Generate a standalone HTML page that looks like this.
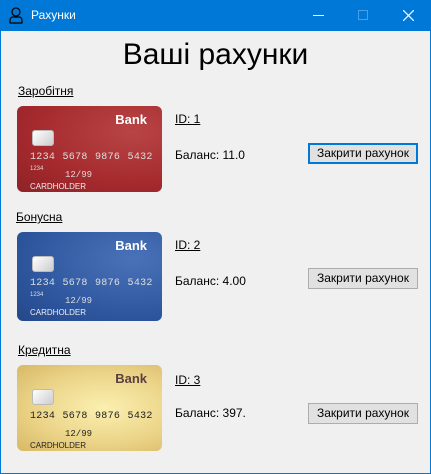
<!DOCTYPE html>
<html><head><meta charset="utf-8"><style>
*{margin:0;padding:0;box-sizing:border-box}
body{width:431px;height:474px;background:#f0f0f0;position:relative;overflow:hidden;font-family:"Liberation Sans",sans-serif;font-size:12px;color:#000}
.frame{position:absolute;left:0;top:0;width:431px;height:474px;border:1px solid #0078d7;border-top:none}
.tb{position:absolute;left:0;top:0;width:431px;height:31px;background:#0078d7;color:#fff}
.tb .t{position:absolute;left:31px;top:8px;font-size:12px}
.a{position:absolute;white-space:nowrap}
.u{text-decoration:underline}
.card{position:absolute;left:17px;width:145px;border-radius:6px;overflow:hidden}
.card .bank{position:absolute;right:15px;top:6px;font-weight:bold;font-size:13px;color:#fff}
.card .chip{position:absolute;left:15px;top:24px;width:22px;height:16px;border-radius:3px;background:linear-gradient(135deg,#fff,#ccc);border:1px solid #bbb}
.card .num{position:absolute;left:13px;top:46px;font-family:"Liberation Mono",monospace;font-size:10px;letter-spacing:0.3px;color:#ddd;white-space:nowrap;word-spacing:1px}
.card .s{position:absolute;left:13px;top:60px;font-size:6px;color:#ddd}
.card .exp{position:absolute;left:48px;top:64px;font-family:"Liberation Mono",monospace;font-size:9px;color:#ddd}
.card .ch{position:absolute;left:13px;top:76px;font-size:8px;color:#eee}
.btn{position:absolute;left:308px;width:110px;height:21px;background:#e1e1e1;border:1px solid #adadad;text-align:center;line-height:19px;font-size:12px}
</style></head><body>
<div class="tb"><svg style="position:absolute;left:9px;top:7px" width="14" height="17" viewBox="0 0 14 17" fill="none" stroke="#000" stroke-width="1.2"><circle cx="7" cy="5" r="4"/><path d="M1 16v-3a3 3 0 0 1 3-3h6a3 3 0 0 1 3 3v3z"/></svg><span class="t">Рахунки</span>
<div style="position:absolute;left:313px;top:15px;width:11px;height:1px;background:#fff"></div>
<div style="position:absolute;left:358px;top:10px;width:10px;height:10px;border:1px solid #4aa0e6"></div>
<svg style="position:absolute;left:403px;top:10px" width="11" height="11"><path d="M0 0L11 11M11 0L0 11" stroke="#fff" stroke-width="1.2"/></svg>
</div>
<div class="a" style="left:0;width:431px;top:38px;text-align:center;font-size:30px">Ваші рахунки</div>

<div class="a u" style="left:18px;top:84px">Заробітня</div>
<div class="card" style="top:106px;height:86px;background:radial-gradient(ellipse at 80% 30%,#b84545,#a52a2e 60%,#8f2226)"><div class="bank">Bank</div><div class="chip"></div><div class="num">1234 5678 9876 5432</div><div class="s">1234</div><div class="exp">12/99</div><div class="ch">CARDHOLDER</div></div>
<div class="a u" style="left:175px;top:112px">ID: 1</div>
<div class="a" style="left:175px;top:148px">Баланс: 11.0</div>
<div class="btn" style="top:143px;border:2px solid #0078d7;line-height:17px">Закрити рахунок</div>

<div class="a u" style="left:16px;top:210px">Бонусна</div>
<div class="card" style="top:232px;height:89px;background:radial-gradient(ellipse at 80% 30%,#4a72b8,#2f58a0 60%,#24478a)"><div class="bank">Bank</div><div class="chip"></div><div class="num">1234 5678 9876 5432</div><div class="s">1234</div><div class="exp">12/99</div><div class="ch">CARDHOLDER</div></div>
<div class="a u" style="left:175px;top:238px">ID: 2</div>
<div class="a" style="left:175px;top:274px">Баланс: 4.00</div>
<div class="btn" style="top:268px">Закрити рахунок</div>

<div class="a u" style="left:18px;top:343px">Кредитна</div>
<div class="card" style="top:365px;height:86px;background:radial-gradient(ellipse at 60% 50%,#fbf0b0,#ecd58a 55%,#d8b865)"><div class="bank" style="color:#5a4040">Bank</div><div class="chip"></div><div class="num" style="color:#222">1234 5678 9876 5432</div><div class="exp" style="color:#222">12/99</div><div class="ch" style="color:#222">CARDHOLDER</div></div>
<div class="a u" style="left:175px;top:373px">ID: 3</div>
<div class="a" style="left:175px;top:406px">Баланс: 397.</div>
<div class="btn" style="top:403px">Закрити рахунок</div>
<div class="frame"></div>
</body></html>
